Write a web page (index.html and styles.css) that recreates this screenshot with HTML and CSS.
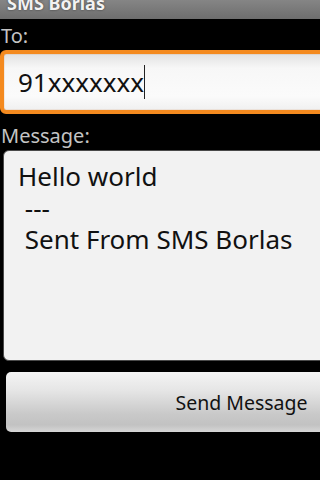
FILE: index.html
```html
<!DOCTYPE html>
<html>
<head>
<meta charset="utf-8">
<title>SMS Borlas</title>
<link rel="stylesheet" href="styles.css">
</head>
<body>
<div class="screen">
  <div class="titlebar"><span class="title-text">SMS Borlas</span></div>
  <div class="label label-to">To:</div>
  <div class="field field-to"><span class="field-text">91xxxxxxx</span><span class="cursor"></span></div>
  <div class="label label-msg">Message:</div>
  <div class="field field-msg"><div class="msg-text">Hello world
 ---
 Sent From SMS Borlas</div></div>
  <div class="button-row"><div class="send-btn">Send Message</div></div>
</div>
</body>
</html>
```

FILE: styles.css
```css
html, body {
  margin: 0;
  padding: 0;
  background: #000;
  width: 320px;
  height: 480px;
  overflow: hidden;
}

.screen {
  width: 320px;
  height: 480px;
  overflow: hidden;
  font-family: "Noto Sans", "Open Sans", sans-serif;
  display: flex;
  flex-direction: column;
  align-items: flex-start;
}

.titlebar {
  width: 100%;
  height: 19px;
  flex: none;
  overflow: hidden;
  background: linear-gradient(#858585, #6e6e6e);
  display: flex;
  align-items: flex-start;
}

.title-text {
  margin-top: -9px;
  padding-left: 7px;
  font-size: 18px;
  line-height: 24px;
  font-weight: bold;
  color: #f2f2f2;
  text-shadow: 0 0 2px #333;
}

.label {
  flex: none;
  font-size: 20px;
  line-height: 29px;
  color: #c4c4c4;
  padding-left: 1px;
}

.label-to {
  padding-top: 2px;
}

.label-msg {
  margin-top: 7px;
}

.field {
  flex: none;
  box-sizing: border-box;
  color: #111;
  font-size: 26px;
}

.field-to {
  width: 340px;
  height: 64px;
  border: 4px solid #f48a1f;
  border-radius: 6px;
  background: linear-gradient(#e2e2e2, #f7f7f7 25%, #fbfbfb 75%, #f0f0f0);
  box-shadow: inset 0 0 1px #c06010;
  padding-left: 14px;
  display: flex;
  align-items: center;
}

.field-text {
  line-height: 36px;
}

.cursor {
  display: inline-block;
  width: 1px;
  height: 34px;
  background: #222;
  margin-left: 0;
}

.field-msg {
  margin-left: 3px;
  width: 340px;
  height: 211px;
  border: 1px solid #4a4a4a;
  border-radius: 6px;
  background: #f2f2f2;
  padding: 10px 0 0 14px;
}

.msg-text {
  white-space: pre;
  line-height: 31.5px;
}

.button-row {
  flex: none;
  margin-top: 11px;
  padding-left: 6px;
}

.send-btn {
  width: 471px;
  height: 60px;
  box-sizing: border-box;
  border-radius: 5px;
  background: linear-gradient(#f4f4f4, #e6e6e6 30%, #c9c9c9 70%, #c2c2c2 88%, #d6d6d6);
  display: flex;
  align-items: center;
  justify-content: center;
  font-size: 19.5px;
  color: #111;
}
```
